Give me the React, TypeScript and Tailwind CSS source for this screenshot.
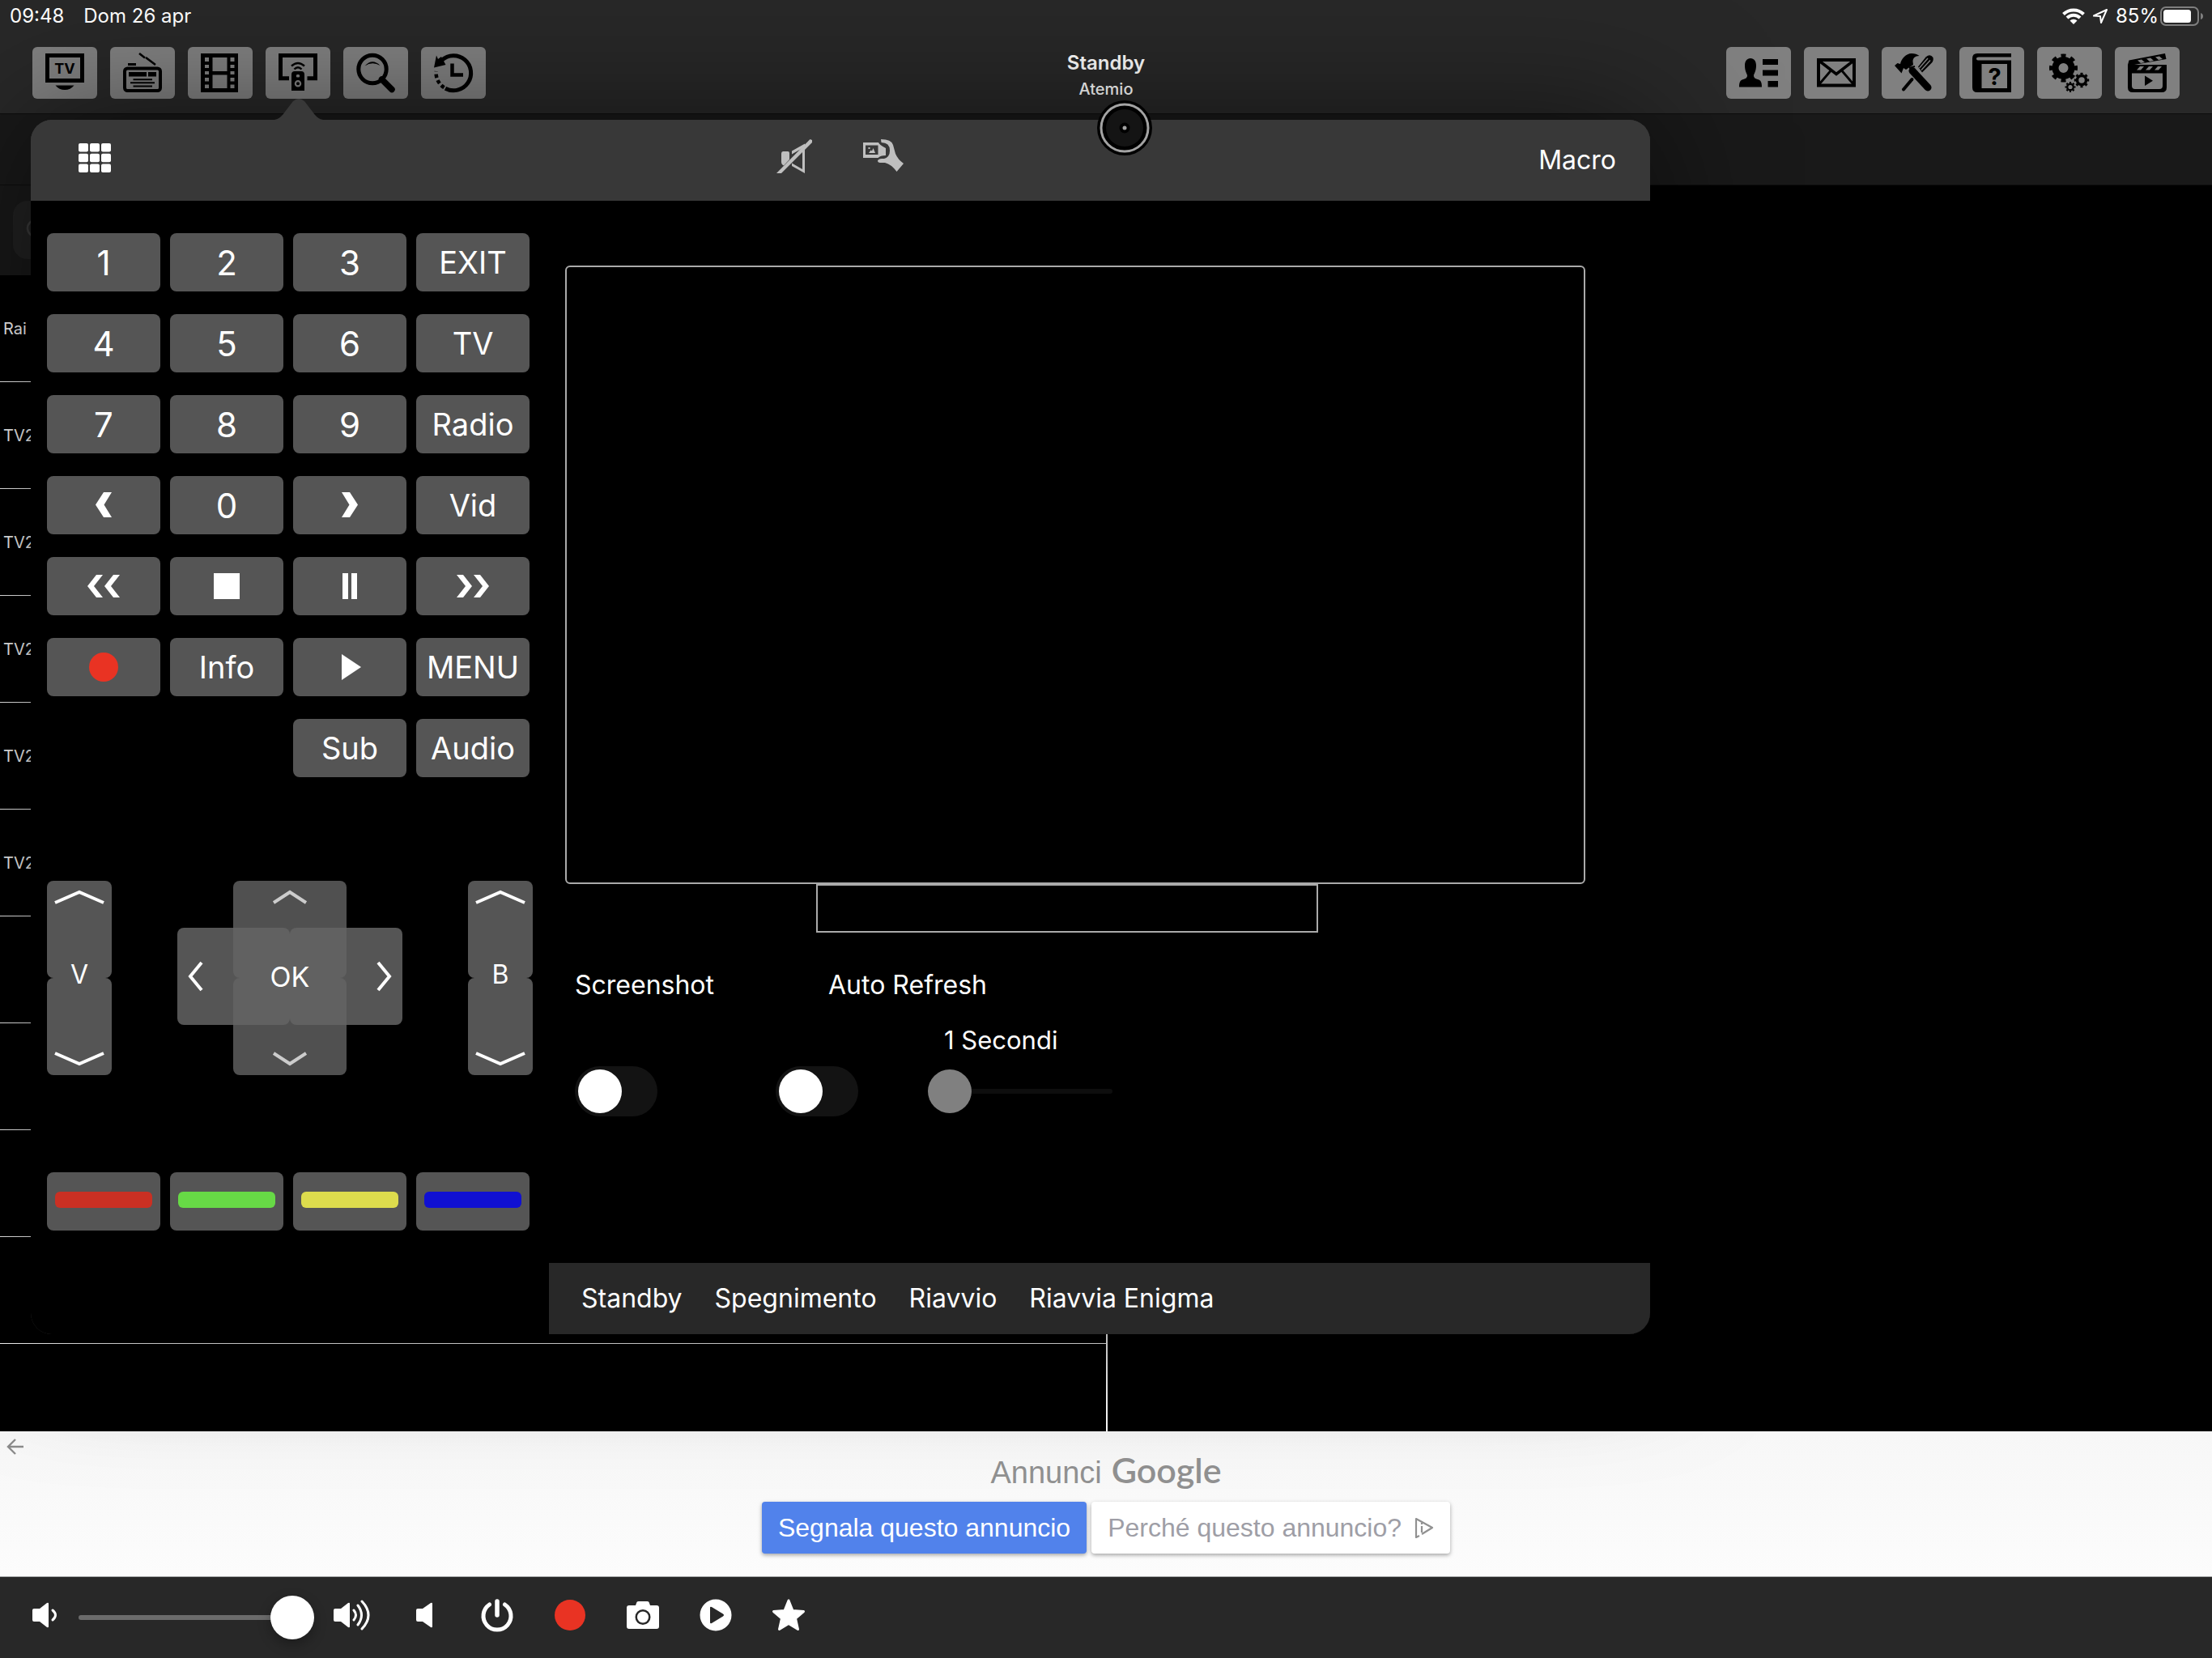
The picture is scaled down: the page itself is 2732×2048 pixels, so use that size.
import { useState, type ReactNode } from "react";

type IconProps = { children: ReactNode };

function Icon48({ children }: IconProps) {
  return (
    <svg viewBox="0 0 48 48" className="size-12 overflow-visible" fill="#000" stroke="none" aria-hidden="true">
      {children}
    </svg>
  );
}

function TvIcon() {
  return (
    <Icon48>
      <path fillRule="evenodd" d="M0 0H48V36H0ZM5 5V31H43V5Z" />
      <text x="24" y="25" textAnchor="middle" fontSize="18" fontWeight="700" fontFamily="Inter, sans-serif">
        TV
      </text>
      <path d="M12.500 39.500H35.500Q31 45 24 45T12.500 39.500Z" />
    </Icon48>
  );
}

function RadioIcon() {
  return (
    <Icon48>
      <rect x="2" y="18.500" width="44" height="27.500" rx="3.500" fill="none" stroke="#000" strokeWidth="4" />
      <path d="M20 0L27 5.500M28 5L40 14" fill="none" stroke="#000" strokeWidth="2.600" />
      <path d="M6 12H16V15H6ZM7 23H29V28.500H7ZM31 23H41V28.500H31ZM12.500 31.300H36V33.200H12.500ZM9 35.300H39V37.200H9ZM12.500 39.500H36V41.500H12.500Z" />
    </Icon48>
  );
}

function FilmIcon() {
  return (
    <Icon48>
      <path
        fillRule="evenodd"
        d="M0 0H46V48H0ZM5 5V10H10V5ZM5 14V18H10V14ZM5 22V26H10V22ZM5 30V34.500H10V30ZM5 38.500V43H10V38.500ZM36.500 5V10H41.500V5ZM36.500 14V18H41.500V14ZM36.500 22V26H41.500V22ZM36.500 30V34.500H41.500V30ZM36.500 38.500V43H41.500V38.500ZM14.500 5V22H32.500V5ZM14.500 26.500V43H32.500V26.500Z"
      />
    </Icon48>
  );
}

function RemoteIcon() {
  return (
    <Icon48>
      <path d="M13 30.800H2.500V2.500H45.500V30.800H35.500" fill="none" stroke="#000" strokeWidth="5" />
      <path
        fillRule="evenodd"
        d="M16 46V26Q16 22 20 22H28Q32 22 32 26V46ZM24 33A4.200 4.200 0 1 0 24 41.500A4.200 4.200 0 1 0 24 33ZM24 26A1.800 1.800 0 1 0 24 29.500A1.800 1.800 0 1 0 24 26Z"
      />
      <circle cx="24" cy="37.300" r="2" />
      <path d="M16 15.500Q24 8.500 32 15.500M19.500 19.500Q24 15 28.500 19.500" fill="none" stroke="#000" strokeWidth="2.400" />
    </Icon48>
  );
}

function SearchIcon() {
  return (
    <Icon48>
      <circle cx="20" cy="19.500" r="17.200" fill="none" stroke="#000" strokeWidth="5" />
      <path d="M10.500 15.500Q20 5.500 29.500 15Q20 9.500 10.500 15.500Z" />
      <path d="M31.500 32L44 44.500" stroke="#000" strokeWidth="7.500" strokeLinecap="round" />
    </Icon48>
  );
}

function HistoryIcon() {
  return (
    <Icon48>
      <path d="M9.500 8.500A21.500 21.500 0 1 1 14 43.200" fill="none" stroke="#000" strokeWidth="5" />
      <path d="M3 2.500L5 7L9 4L14.500 14L0 17.500Z" />
      <path d="M22.500 12.500V26.500H36" fill="none" stroke="#000" strokeWidth="4.500" />
      <path d="M12.500 42.200A21.500 21.500 0 0 1 2.700 22" fill="none" stroke="#000" strokeWidth="4.500" strokeDasharray="4.500 3.200" />
    </Icon48>
  );
}

function ContactsIcon() {
  return (
    <Icon48>
      <path d="M14 6C18.500 6 21 9.500 21 15C21 21 19 24 18 27C18 30.500 20 31 23 32C26.500 33 28 35 28 41.500H0C0 35 1.500 33 5 32C8 31 10 30.500 10 27C9 24 7 21 7 15C7 9.500 9.500 6 14 6Z" />
      <path d="M29 7H48V14H29ZM29 20.500H48V27.500H29ZM35.500 34H48V41.500H35.500Z" />
    </Icon48>
  );
}

function MailIcon() {
  return (
    <Icon48>
      <g fill="none" stroke="#000" strokeWidth="4">
        <rect x="2" y="8" width="44" height="31.500" />
        <path d="M2 8.500L24 25.500L46 8.500" strokeWidth="3.500" />
        <path d="M2.500 38.500L17 21.500M45.500 38.500L31 21.500" strokeWidth="2.800" />
      </g>
    </Icon48>
  );
}

function ToolsIcon() {
  return (
    <Icon48>
      <path d="M0 15L3.500 12L7 13C8 7 14 0 21 0C25 0 28 1 30.500 3C25 3 22.500 6 22.500 10L23 14L14 20L11 18L8.500 24.500Z" />
      <path d="M22 21.500L41 42" stroke="#000" strokeWidth="9" strokeLinecap="round" />
      <path d="M18 18L25 16" stroke="#000" strokeWidth="2" />
      <path d="M29 16.500L38.500 4.500Q44 0 47.500 5Q48.500 9 45.500 12L34 23.500Z" />
      <path d="M30.500 18L41 6M33 20.500L44 8.500" stroke="#7f7f7f" strokeWidth="1.400" />
      <path d="M21.500 32L11 44.500" stroke="#000" strokeWidth="4" strokeLinecap="round" />
    </Icon48>
  );
}

function HelpIcon() {
  return (
    <Icon48>
      <path
        fillRule="evenodd"
        d="M6 0H48V4.500H8Q5 4.500 5 6.500T8 8.500H48V48H6Q0 48 0 42V6Q0 0 6 0ZM11.500 13V43H43V13Z"
      />
      <text x="27.500" y="38.500" textAnchor="middle" fontSize="29" fontWeight="700" fontFamily="Inter, sans-serif">
        ?
      </text>
    </Icon48>
  );
}

function GearsIcon() {
  return (
    <Icon48>
      <g fill="none" stroke="#000">
        <circle cx="16.500" cy="18" r="10" strokeWidth="8" />
        <circle cx="16.500" cy="18" r="15" strokeWidth="5" pathLength="16" strokeDasharray="1 1" strokeDashoffset="0.500" />
        <circle cx="39" cy="33" r="5.500" strokeWidth="3.500" />
        <circle cx="39" cy="33" r="8" strokeWidth="2.500" pathLength="16" strokeDasharray="1 1" strokeDashoffset="0.500" />
        <circle cx="25" cy="41.500" r="3.800" strokeWidth="2.400" />
        <circle cx="25" cy="41.500" r="5.600" strokeWidth="1.800" pathLength="16" strokeDasharray="1 1" strokeDashoffset="0.500" />
      </g>
    </Icon48>
  );
}

function ClapperIcon() {
  return (
    <Icon48>
      <path
        fillRule="evenodd"
        d="M1.500 8.500L46 0L47.500 7L8 14H48V42Q48 48 42 48H6Q0 48 0 42V14ZM5 24.500V40Q5 44 9 44H39Q43 44 43 40V24.500ZM15 16L11 20.500H16L20 16ZM26 16L22 20.500H27L31 16ZM37 16L33 20.500H38L42 16ZM12 8.500L16 12L21 11L17 7.500ZM23 6.500L27 10L32 9L28 5.500ZM34 4.500L38 8L43 7L39 3.500Z"
      />
      <path d="M21 27.500L31 33.700L21 40Z" />
    </Icon48>
  );
}

function Chevron({ points, className }: { points: string; className: string }) {
  return (
    <svg className={className} fill="none" stroke="currentColor" strokeWidth="4" aria-hidden="true">
      <polyline points={points} />
    </svg>
  );
}

const mediaIcons: Record<string, ReactNode> = {
  prev: <path d="M10 0H20L10.500 15.500L20 31H10L0 15.500Z" transform="translate(10 4)" />,
  next: <path d="M0 0H10L20 15.500L10 31H0L9.500 15.500Z" transform="translate(10 4)" />,
  rewind: <path d="M11 0H19L8 14L19 28H11L0 14ZM32 0H40L29 14L40 28H32L21 14Z" transform="translate(0 6)" />,
  forward: <path d="M0 0H8L19 14L8 28H0L11 14ZM21 0H29L40 14L29 28H21L32 14Z" transform="translate(0 6)" />,
  stop: <path d="M4 4H36V36H4Z" />,
  pause: <path d="M11 4H18V36H11ZM22 4H29V36H22Z" />,
  play: <path d="M10 4L34 20L10 36Z" />,
  record: <circle cx="20" cy="20" r="18" fill="#e93323" />,
};

const keys: { label: string; icon?: string; digit?: boolean }[] = [
  { label: "1", digit: true },
  { label: "2", digit: true },
  { label: "3", digit: true },
  { label: "EXIT" },
  { label: "4", digit: true },
  { label: "5", digit: true },
  { label: "6", digit: true },
  { label: "TV" },
  { label: "7", digit: true },
  { label: "8", digit: true },
  { label: "9", digit: true },
  { label: "Radio" },
  { label: "Previous", icon: "prev" },
  { label: "0", digit: true },
  { label: "Next", icon: "next" },
  { label: "Vid" },
  { label: "Rewind", icon: "rewind" },
  { label: "Stop", icon: "stop" },
  { label: "Pause", icon: "pause" },
  { label: "Forward", icon: "forward" },
  { label: "Record", icon: "record" },
  { label: "Info" },
  { label: "Play", icon: "play" },
  { label: "MENU" },
];

function Key({ label, icon, digit }: { label: string; icon?: string; digit?: boolean }) {
  return (
    <button
      type="button"
      aria-label={label}
      className={`flex h-[72px] items-center justify-center rounded-lg bg-[#555] ${digit ? "text-[42px]" : "text-[38px]"}`}
    >
      {icon ? (
        <svg viewBox="0 0 40 40" className="size-10" fill="#fff" aria-hidden="true">
          {mediaIcons[icon]}
        </svg>
      ) : (
        label
      )}
    </button>
  );
}

function Rocker({ label, name }: { label: string; name: string }) {
  return (
    <div className="grid w-20">
      <div className="col-start-1 row-start-1 flex flex-col">
        <button type="button" aria-label={`${name} up`} className="flex h-[120px] justify-center rounded-lg bg-[#555] pt-[10px]">
          <Chevron className="h-5 w-16" points="2,17 32,4 62,17" />
        </button>
        <button type="button" aria-label={`${name} down`} className="flex h-[120px] items-end justify-center rounded-lg bg-[#555] pb-[10px]">
          <Chevron className="h-5 w-16" points="2,3 32,16 62,3" />
        </button>
      </div>
      <span className="pointer-events-none z-10 col-start-1 row-start-1 self-center pb-2 text-center text-[32px]">{label}</span>
    </div>
  );
}

function DirectionPad() {
  return (
    <div className="grid w-[278px]">
      <div className="col-start-1 row-start-1 mb-1 flex h-[120px] self-center">
        <button type="button" aria-label="Left" className="flex flex-1 items-center rounded-lg bg-[#555] pl-3">
          <Chevron className="h-10 w-5" points="18,3 4,20 18,37" />
        </button>
        <button type="button" aria-label="Right" className="flex flex-1 items-center justify-end rounded-lg bg-[#555] pr-3">
          <Chevron className="h-10 w-5" points="2,3 16,20 2,37" />
        </button>
      </div>
      <div className="col-start-1 row-start-1 flex w-[140px] flex-col justify-self-center">
        <button type="button" aria-label="Up" className="flex h-[120px] justify-center rounded-lg bg-[#646464] pt-[10px] opacity-80">
          <Chevron className="h-5 w-11" points="2,17 22,4 42,17" />
        </button>
        <button type="button" aria-label="Down" className="flex h-[120px] items-end justify-center rounded-lg bg-[#646464] pb-[10px] opacity-80">
          <Chevron className="h-5 w-11" points="2,3 22,16 42,3" />
        </button>
      </div>
      <button type="button" className="z-10 col-start-1 row-start-1 place-self-center pb-1 text-[34px]">
        OK
      </button>
    </div>
  );
}

const colorKeys = [
  { name: "Red", bar: "bg-[#ca3023]" },
  { name: "Green", bar: "bg-[#67d946]" },
  { name: "Yellow", bar: "bg-[#dddc4d]" },
  { name: "Blue", bar: "bg-[#1010d2]" },
];

const switchClass =
  "block h-[62px] w-[102px] appearance-none rounded-full bg-[#131313] p-1 before:block before:size-[54px] before:rounded-full before:bg-white checked:bg-green-500 checked:before:translate-x-10";

function ToolButton({ label, children }: { label: string; children: ReactNode }) {
  return (
    <button type="button" aria-label={label} className="flex h-16 w-20 items-center justify-center rounded-md bg-[#808080]">
      {children}
    </button>
  );
}

function StatusBar() {
  return (
    <div className="flex h-10 items-center justify-between pr-[10px] pl-3 text-2xl">
      <div className="flex gap-6">
        <span>09:48</span>
        <span>Dom 26 apr</span>
      </div>
      <div className="flex items-center gap-[10px]">
        <svg viewBox="0 0 28 20" className="h-5 w-7" fill="none" stroke="#fff" strokeWidth="4" aria-hidden="true">
          <path d="M1.500 7.500A18 18 0 0 1 26.500 7.500M6 12A11.500 11.500 0 0 1 22 12" />
          <path d="M14 20L9.500 15.500A6.500 6.500 0 0 1 18.500 15.500Z" fill="#fff" stroke="none" />
        </svg>
        <svg viewBox="0 0 18 18" className="size-[18px]" fill="none" stroke="#fff" strokeWidth="2" strokeLinejoin="round" aria-hidden="true">
          <path d="M1 8.500L17 1L10 17L9 9Z" />
        </svg>
        <span>85%</span>
        <svg viewBox="0 0 54 24" className="-ml-2 h-6 w-[54px]" aria-hidden="true">
          <rect x="1" y="1" width="46" height="22" rx="6" fill="none" stroke="#7f7f7f" strokeWidth="2" />
          <rect x="4" y="4" width="34" height="16" rx="3.500" fill="#fff" />
          <path d="M50 8Q53 9 53 12T50 16Z" fill="#7f7f7f" />
        </svg>
      </div>
    </div>
  );
}

function TopBar() {
  return (
    <header className="border-b border-[#0d0d0d] bg-[#282828] pb-[18px]">
      <StatusBar />
      <nav className="mt-[18px] flex h-16 justify-between px-10">
        <div className="flex gap-4">
          <ToolButton label="TV"><TvIcon /></ToolButton>
          <ToolButton label="Radio"><RadioIcon /></ToolButton>
          <ToolButton label="Movies"><FilmIcon /></ToolButton>
          <ToolButton label="Remote"><RemoteIcon /></ToolButton>
          <ToolButton label="Search"><SearchIcon /></ToolButton>
          <ToolButton label="Timers"><HistoryIcon /></ToolButton>
        </div>
        <div className="text-center">
          <h1 className="text-2xl leading-10 font-semibold">Standby</h1>
          <p className="text-xl leading-6 font-medium">Atemio</p>
        </div>
        <div className="flex gap-4">
          <ToolButton label="Profiles"><ContactsIcon /></ToolButton>
          <ToolButton label="Messages"><MailIcon /></ToolButton>
          <ToolButton label="Tools"><ToolsIcon /></ToolButton>
          <ToolButton label="Help"><HelpIcon /></ToolButton>
          <ToolButton label="Settings"><GearsIcon /></ToolButton>
          <ToolButton label="Recordings"><ClapperIcon /></ToolButton>
        </div>
      </nav>
    </header>
  );
}

const channels = ["Rai", "TV2", "TV2", "TV2", "TV2", "TV2", "", "", "", ""];

function ChannelList() {
  return (
    <section className="flex w-[calc(50%+2px)] flex-col border-r-2 border-white">
      <div className="h-[111px] bg-[#191919] px-4 pt-[19px]">
        <label className="flex h-[72px] items-center gap-3 rounded-[18px] bg-[#222] px-4">
          <svg viewBox="0 0 28 28" className="size-7" fill="none" stroke="#3a3a3a" strokeWidth="2.500" aria-hidden="true">
            <circle cx="12" cy="12" r="10" />
            <path d="M19 19L27 27" />
          </svg>
          <input type="search" aria-label="Cerca" className="h-full flex-1 bg-transparent outline-none" />
        </label>
      </div>
      <ul className="text-xl text-white">
        {channels.map((name, i) => (
          <li key={i} className="flex h-[132px] items-center border-b border-white pl-1">
            {name}
          </li>
        ))}
      </ul>
    </section>
  );
}

function RemoteHeader() {
  return (
    <div className="grid h-[100px] grid-cols-3 items-center bg-[#383838] px-[42px]">
      <button type="button" aria-label="Keypad" className="ml-[17px] justify-self-start pb-[6px]">
        <svg viewBox="0 0 40 36" className="h-9 w-10" fill="#fff" aria-hidden="true">
          {[0, 14, 28].map((x) =>
            [0, 12.7, 25.4].map((y) => <rect key={`${x}-${y}`} x={x} y={y} width="12" height="10.600" rx="2" />),
          )}
        </svg>
      </button>
      <div className="flex justify-center gap-[63px] pb-[10px]">
        <button type="button" aria-label="Mute">
          <svg viewBox="0 0 44 42" className="h-[42px] w-11" fill="#bfbfbf" aria-hidden="true">
            <path d="M8.500 15H14Q16 15 16 17V25L9 32.500Q6 31 6 28V18Q6 15 8.500 15Z" />
            <path d="M19 14.500L35 5.500V42L19 33V29.500L32 37V11L19 18.500Z" />
            <path d="M0 42L41.500 0L44 1V4L6 42Z" />
          </svg>
        </button>
        <button type="button" aria-label="Screenshot gallery">
          <svg viewBox="0 0 50 42" className="h-[42px] w-[50px]" fill="#bfbfbf" aria-hidden="true">
            <path fillRule="evenodd" d="M0 4H19Q20 7 28 11V20Q21 20 18.500 23H0ZM3 7.500V19H18.500V7.500Z" />
            <path d="M7 17L9.500 13.500L11 14.500L12.500 11L15 17ZM6.500 10H8.500V12H6.500Z" />
            <path d="M22 0Q35 0 37 7L40 18Q43 25 50 30L41.500 40Q35 31 27 29H21Q18 28.500 18 26.500Q19 24 23 24H26Q33 22 33 14Q33 4 22.500 4Z" />
          </svg>
        </button>
      </div>
      <button type="button" className="justify-self-end text-[32px]">
        Macro
      </button>
    </div>
  );
}

function RemotePopover() {
  const [seconds, setSeconds] = useState(1);

  return (
    <div className="absolute top-[148px] left-[38px] z-10 w-[calc(100%-76px)] max-w-[2000px] rounded-[26px] bg-[#383838] shadow-[0_0_160px_rgba(0,0,0,0.55)]">
      <svg viewBox="0 0 72 27" className="absolute -top-[26px] left-[295px] h-[27px] w-[72px]" fill="#383838" aria-hidden="true">
        <path d="M0 27C11 26 14 23 19 16L29 3Q36 -3 43 3L53 16C58 23 61 26 72 27Z" />
      </svg>
      <div className="overflow-hidden rounded-[26px]">
        <RemoteHeader />
        <div className="flex bg-black">
          <div className="w-[640px] shrink-0 pt-10 pb-32 pl-5">
            <div className="grid w-[596px] grid-cols-4 gap-x-3 gap-y-7">
              {keys.map((key) => (
                <Key key={key.label} {...key} />
              ))}
              <div className="col-start-3 grid">
                <Key label="Sub" />
              </div>
              <Key label="Audio" />
            </div>
            <div className="mt-32 flex w-[600px] justify-between">
              <Rocker label="V" name="Volume" />
              <DirectionPad />
              <Rocker label="B" name="Bouquet" />
            </div>
            <div className="mt-[120px] grid w-[596px] grid-cols-4 gap-x-3">
              {colorKeys.map(({ name, bar }) => (
                <button key={name} type="button" aria-label={name} className="h-[72px] rounded-lg bg-[#555] px-[10px] pb-1">
                  <span className={`block h-5 rounded-md ${bar}`} />
                </button>
              ))}
            </div>
          </div>

          <div className="flex flex-1 flex-col">
            <div className="mt-20 mr-20 ml-5 aspect-[1260/764] rounded-md border-2 border-[#aaa]" />
            <div className="ml-[330px] h-[60px] w-[620px] border-2 border-[#aaa]" />
            <div className="mt-[45px] ml-8 flex text-[32px] leading-10">
              <label htmlFor="screenshot" className="w-[313px]">Screenshot</label>
              <label htmlFor="auto-refresh">Auto Refresh</label>
            </div>
            <div className="mt-7 ml-8 flex items-end">
              <input id="screenshot" type="checkbox" className={switchClass} />
              <input id="auto-refresh" type="checkbox" className={`ml-[146px] ${switchClass}`} />
              <div className="ml-[86px] flex w-[228px] flex-col gap-3">
                <label htmlFor="interval" className="pl-5 text-[31px] leading-10">
                  {seconds} Secondi
                </label>
                <input
                  id="interval"
                  type="range"
                  min={1}
                  max={60}
                  value={seconds}
                  onChange={(e) => setSeconds(Number(e.target.value))}
                  className="h-[62px] w-full appearance-none bg-transparent [&::-webkit-slider-runnable-track]:h-1.5 [&::-webkit-slider-runnable-track]:rounded-full [&::-webkit-slider-runnable-track]:bg-[#0e0e0e] [&::-webkit-slider-thumb]:-mt-6 [&::-webkit-slider-thumb]:size-[54px] [&::-webkit-slider-thumb]:appearance-none [&::-webkit-slider-thumb]:rounded-full [&::-webkit-slider-thumb]:bg-[#808080]"
                />
              </div>
            </div>
            <div className="mt-auto flex h-[88px] items-center gap-10 bg-[#282828] pl-10 text-[32px]">
              <button type="button">Standby</button>
              <button type="button">Spegnimento</button>
              <button type="button">Riavvio</button>
              <button type="button">Riavvia Enigma</button>
            </div>
          </div>
        </div>
      </div>
    </div>
  );
}

function AdBanner() {
  return (
    <aside className="flex h-[180px] items-start border-b border-[#a8aaaa] bg-linear-to-b from-[#f7f7f7] to-[#fcfcfc] font-['Liberation_Sans',sans-serif]">
      <button type="button" aria-label="Indietro" className="mt-2 ml-2 w-6">
        <svg viewBox="0 0 22 22" className="size-[22px]" fill="none" stroke="#8c8c8c" strokeWidth="2.400" aria-hidden="true">
          <path d="M21 11H2M11 2L2 11L11 20" />
        </svg>
      </button>
      <div className="flex flex-1 flex-col items-center pr-8">
        <div className="mt-5 flex h-[67px] items-baseline gap-3 text-[#919191]">
          <span className="text-[38px]">Annunci</span>
          <span className="font-['Lato',sans-serif] text-[43px] leading-[56px] font-semibold">Google</span>
        </div>
        <div className="flex gap-[6px] text-[32px]">
          <button type="button" className="h-16 rounded-sm bg-[#5182eb] px-5 text-white shadow-[0_2px_5px_rgba(0,0,0,0.35)]">
            Segnala questo annuncio
          </button>
          <button type="button" className="flex h-16 items-center gap-4 rounded-sm bg-white px-5 text-[#9e9ea6] shadow-[0_2px_5px_rgba(0,0,0,0.35)]">
            Perché questo annuncio?
            <svg viewBox="0 0 24 26" className="h-[26px] w-6" fill="none" stroke="#919191" strokeWidth="2.200" strokeLinejoin="round" aria-hidden="true">
              <path d="M6 23L2 25V2L22 13L9 21" />
              <path d="M9 11V19M9 7V9" />
            </svg>
          </button>
        </div>
      </div>
    </aside>
  );
}

function PlayerButton({ label, children }: { label: string; children: ReactNode }) {
  return (
    <button type="button" aria-label={label} className="flex w-[90px] justify-center">
      <svg viewBox="0 0 44 44" className="size-11" fill="#fff" aria-hidden="true">
        {children}
      </svg>
    </button>
  );
}

function PlayerBar() {
  return (
    <footer className="z-20 flex h-[100px] items-center bg-[#282828] pb-[6px] pl-[39px]">
      <svg viewBox="0 0 34 32" className="h-8 w-[34px]" fill="#fff" aria-hidden="true">
        <path d="M3 8H10L19 1Q21 0 21 2V30Q21 32 19 31L10 24H3Q1 24 1 22V10Q1 8 3 8Z" />
        <path d="M26 10Q33 16 26 22" fill="none" stroke="#fff" strokeWidth="3" strokeLinecap="round" />
      </svg>
      <input
        type="range"
        aria-label="Volume"
        defaultValue={100}
        className="mt-[6px] ml-6 h-14 w-[291px] appearance-none bg-transparent [&::-webkit-slider-runnable-track]:h-1.5 [&::-webkit-slider-runnable-track]:rounded-full [&::-webkit-slider-runnable-track]:bg-[#6b6b6b] [&::-webkit-slider-thumb]:-mt-6 [&::-webkit-slider-thumb]:size-[54px] [&::-webkit-slider-thumb]:appearance-none [&::-webkit-slider-thumb]:rounded-full [&::-webkit-slider-thumb]:bg-white [&::-webkit-slider-thumb]:shadow-[0_6px_16px_rgba(0,0,0,0.3)]"
      />
      <svg viewBox="0 0 46 40" className="ml-6 h-10 w-[46px]" fill="#fff" aria-hidden="true">
        <path d="M2 12H9L18 5Q20 4 20 6V34Q20 36 18 35L9 28H2Q0 28 0 26V14Q0 12 2 12Z" />
        <path d="M25 14Q30 20 25 26M30 8Q39 20 30 32M35 3Q51 20 35 37" fill="none" stroke="#fff" strokeWidth="3" strokeLinecap="round" />
      </svg>
      <div className="ml-[21px] flex">
        <PlayerButton label="Mute">
          <path d="M14 14H20L30 7Q32 6 32 8V36Q32 38 30 37L20 30H14Q12 30 12 28V16Q12 14 14 14Z" />
        </PlayerButton>
        <PlayerButton label="Power">
          <path d="M12.500 9A17 17 0 1 0 31.500 9" fill="none" stroke="#fff" strokeWidth="5" strokeLinecap="round" />
          <path d="M22 5V22" stroke="#fff" strokeWidth="5.500" strokeLinecap="round" />
        </PlayerButton>
        <PlayerButton label="Record">
          <circle cx="22" cy="22" r="19" fill="#e93323" />
        </PlayerButton>
        <PlayerButton label="Screenshot">
          <path
            fillRule="evenodd"
            d="M13 10L14.500 6Q15 5 17 5H27Q29 5 29.500 6L31 10H39Q42 10 42 13V36Q42 39 39 39H5Q2 39 2 36V13Q2 10 5 10ZM22 15A9.500 9.500 0 1 0 22 34A9.500 9.500 0 1 0 22 15Z"
          />
          <circle cx="22" cy="24.500" r="7" />
        </PlayerButton>
        <PlayerButton label="Play">
          <path fillRule="evenodd" d="M22 2.500A19.500 19.500 0 1 0 22 41.500A19.500 19.500 0 1 0 22 2.500ZM17 12L31 20.500Q33 22 31 23.500L17 32Q15 33 15 31V13Q15 11 17 12Z" />
        </PlayerButton>
        <PlayerButton label="Favorites">
          <path
            d="M22 4L27 16.500L40.500 17.500L30.500 26L33.500 39.500L22 32.500L10.500 39.500L13.500 26L3.500 17.500L17 16.500Z"
            stroke="#fff"
            strokeWidth="3"
            strokeLinejoin="round"
          />
        </PlayerButton>
      </div>
    </footer>
  );
}

export default function App() {
  return (
    <div className="relative flex min-h-screen flex-col bg-black font-['Inter',sans-serif] text-white">
      <TopBar />
      <div className="h-[88px] border-b border-[#0d0d0d] bg-[#191919]" />
      <main className="flex h-0 grow overflow-hidden">
        <ChannelList />
      </main>
      <AdBanner />
      <PlayerBar />
      <RemotePopover />
      {/* touch indicator */}
      <svg viewBox="0 0 68 68" className="absolute top-[124px] left-[calc(50%-11px)] z-30 size-[68px]" aria-hidden="true">
        <circle cx="34" cy="34" r="34" fill="#000" />
        <circle cx="34" cy="34" r="29" fill="#000" stroke="#a3a3a3" strokeWidth="3" />
        <circle cx="34" cy="34" r="23" fill="#141414" />
        <circle cx="34" cy="34" r="6.500" fill="#000" />
        <circle cx="34" cy="34" r="2.500" fill="#a3a3a3" />
      </svg>
    </div>
  );
}
